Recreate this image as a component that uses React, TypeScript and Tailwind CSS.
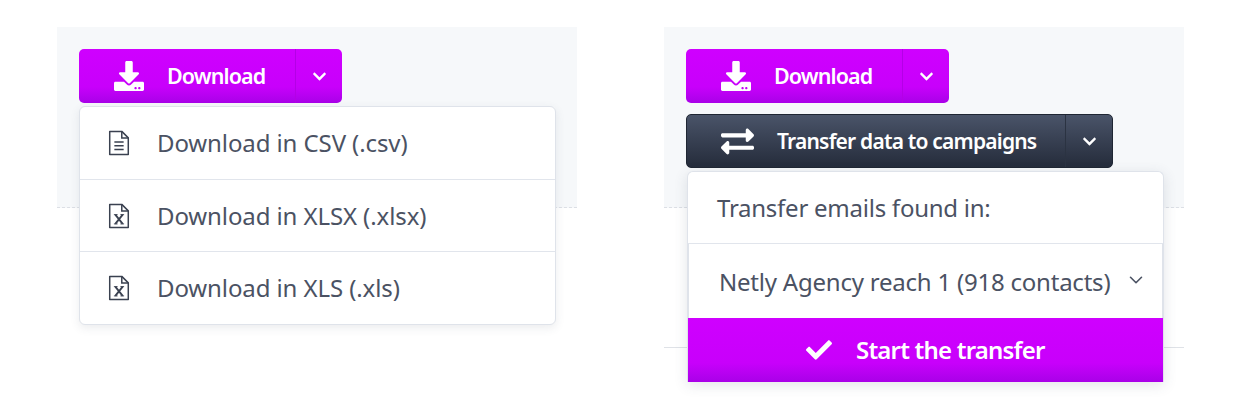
import { ChevronDown } from 'lucide-react';
import { FaCheck, FaChevronDown, FaDownload, FaExchangeAlt } from 'react-icons/fa';

const font = { fontFamily: '"Noto Sans", sans-serif' };

function SplitButton({
  label,
  icon,
  dark,
  widthClass,
  labelClass,
}: {
  label: string;
  icon: React.ReactNode;
  dark?: boolean;
  widthClass: string;
  labelClass: string;
}) {
  const colors = dark
    ? 'border border-[#1f2633] bg-gradient-to-b from-[#4a5469] to-[#252c3b]'
    : 'bg-gradient-to-b from-[#cf00ff] via-[#c800fb] via-70% to-[#a900e8]';
  return (
    <div className={`flex items-stretch rounded-[5px] text-white ${colors} ${widthClass}`}>
      <div className="flex flex-1 items-center">
        {icon}
        <span className={`font-semibold ${labelClass}`}>{label}</span>
      </div>
      <div
        className={`flex w-[47px] shrink-0 items-center justify-center border-l ${
          dark ? 'border-[#2b3342]' : 'border-[#b400e6]'
        }`}
      >
        <FaChevronDown className="h-[15px] w-[15px]" />
      </div>
    </div>
  );
}

function FileLines() {
  return (
    <svg viewBox="0 0 24 28" className="h-[26px] w-[24px]" fill="none" stroke="#3a4150" strokeWidth="1.6">
      <path d="M2 1.5h13l7 7v18H2z" strokeLinejoin="round" />
      <path d="M15 1.5v7h7M7 13h10M7 17h10M7 21h10" />
    </svg>
  );
}

function FileX() {
  return (
    <svg viewBox="0 0 24 28" className="h-[26px] w-[24px]" fill="none" stroke="#3a4150" strokeWidth="1.6">
      <path d="M2 1.5h13l7 7v18H2z" strokeLinejoin="round" />
      <path d="M15 1.5v7h7" />
      <path d="M8 12.5l8 10M16 12.5l-8 10" strokeWidth="2" />
      <path d="M6.5 12.5h4M13.5 12.5h4M6.5 22.5h4M13.5 22.5h4" strokeWidth="1" />
    </svg>
  );
}

function MenuRow({ icon, label, heightClass, last }: { icon: React.ReactNode; label: string; heightClass: string; last?: boolean }) {
  return (
    <div className={`flex items-center pl-[27px] ${heightClass} ${last ? '' : 'border-b border-[#e1e5ec]'}`}>
      <span className="flex w-[50px] shrink-0">{icon}</span>
      <span className="text-[24px] tracking-[-0.1px] text-[#4b5263]">{label}</span>
    </div>
  );
}

function Panel({ children, menu }: { children: React.ReactNode; menu: React.ReactNode }) {
  return (
    <div className="relative w-[520px]">
      <div className="flex h-[181px] flex-col gap-[11px] border-b border-dashed border-[#dcdfe5] bg-[#f6f8fa] pl-[22px] pt-[22px]">
        {children}
      </div>
      {menu}
    </div>
  );
}

export default function App() {
  return (
    <div className="flex h-[415px] w-[1240px] gap-[87px] bg-white pl-[57px] pt-[27px]" style={font}>
      <Panel
        menu={
          <div className="absolute left-[22px] top-[79px] w-[477px] rounded-[6px] border border-[#dfe3ea] bg-white shadow-[0_3px_10px_rgba(60,70,90,0.1)]">
            <MenuRow icon={<FileLines />} label="Download in CSV (.csv)" heightClass="h-[73px]" />
            <MenuRow icon={<FileX />} label="Download in XLSX (.xlsx)" heightClass="h-[72px]" />
            <MenuRow icon={<FileX />} label="Download in XLS (.xls)" heightClass="h-[72px]" last />
          </div>
        }
      >
        <SplitButton
          label="Download"
          widthClass="h-[54px] w-[263px]"
          labelClass="pt-[1px] text-[21.5px] tracking-[-0.9px]"
          icon={<FaDownload className="ml-[35px] mr-[23px] h-[30px] w-[30px]" />}
        />
      </Panel>

      <div className="flex flex-col">
        <Panel
          menu={
            <div className="absolute left-[23px] top-[144px] w-[477px] rounded-t-[6px] border-x border-t border-[#dfe3ea] bg-white shadow-[0_3px_14px_rgba(60,70,90,0.14)]">
              <div className="flex h-[72px] items-center border-b border-[#e1e5ec] pl-[29px] text-[24px] tracking-[-0.25px] text-[#4b5263]">
                Transfer emails found in:
              </div>
              <div className="flex h-[74px] items-center border-x border-[#dfe3ea] pl-[30px] pt-[2px] text-[24px] tracking-[-0.22px] text-[#4b5263]">
                <span className="whitespace-nowrap">Netly Agency reach 1 (918 contacts)</span>
                <ChevronDown className="ml-[15px] h-[22px] w-[22px] -translate-y-[2px]" strokeWidth={1.75} />
              </div>
              <div className="flex h-[64px] items-center bg-gradient-to-b from-[#cf00ff] via-[#c800fb] via-70% to-[#a900e8] pl-[118px] text-white">
                <FaCheck className="mr-[24px] h-[26px] w-[26px]" />
                <span className="text-[24px] font-semibold tracking-[-0.8px]">Start the transfer</span>
              </div>
            </div>
          }
        >
          <SplitButton
            label="Download"
            widthClass="h-[54px] w-[263px]"
            labelClass="pt-[1px] text-[21.5px] tracking-[-0.9px]"
            icon={<FaDownload className="ml-[35px] mr-[23px] h-[30px] w-[30px]" />}
          />
          <SplitButton
            dark
            label="Transfer data to campaigns"
            widthClass="h-[54px] w-[427px]"
            labelClass="text-[21px] tracking-[-0.8px] pt-[2px]"
            icon={<FaExchangeAlt className="ml-[34px] mr-[23px] h-[33px] w-[33px]" />}
          />
        </Panel>
        <div className="h-[140px] w-[520px] border-b border-[#dfe2e7]" />
      </div>
    </div>
  );
}
